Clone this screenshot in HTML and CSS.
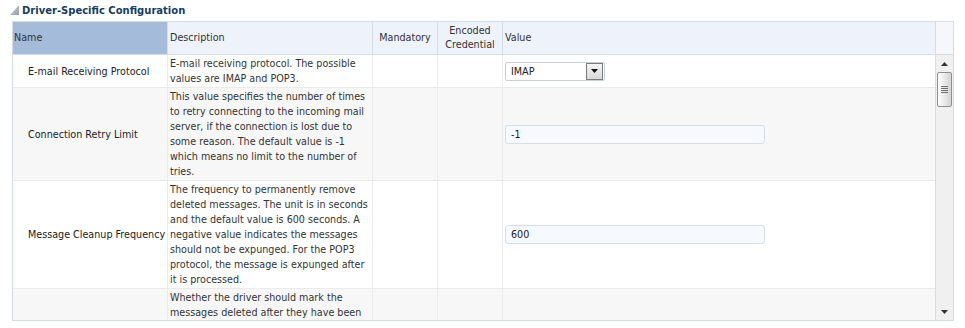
FILE: index.html
```html
<!DOCTYPE html>
<html lang="en">
<head>
    <meta charset="utf-8">
    <title>Driver-Specific Configuration</title>
    <link rel="stylesheet" href="styles.css">
</head>
<body>
<div class="section">
    <h2 class="section-title">
        <svg class="disclosure" width="9" height="10" viewBox="0 0 9 10">
            <defs>
                <linearGradient id="tri" x1="0" y1="0" x2="1" y2="1">
                    <stop offset="0" stop-color="#d9dee4"/>
                    <stop offset="1" stop-color="#8e9aa6"/>
                </linearGradient>
            </defs>
            <polygon points="9,0 9,10 0,10" fill="url(#tri)"/>
        </svg>
        Driver-Specific Configuration
    </h2>

    <div class="grid">
        <div class="grid-head">
            <div class="hcell selected">Name</div>
            <div class="hcell">Description</div>
            <div class="hcell center">Mandatory</div>
            <div class="hcell center">Encoded<br>Credential</div>
            <div class="hcell">Value</div>
            <div class="hcell scroll-head"></div>
        </div>

        <div class="grid-body">
            <div class="rows">
                <!-- E-mail protocol -->
                <div class="row r1">
                    <div class="cell name">E-mail Receiving Protocol</div>
                    <div class="cell desc">E-mail receiving protocol. The possible<br>values are IMAP and POP3.</div>
                    <div class="cell"></div>
                    <div class="cell"></div>
                    <div class="cell value">
                        <div class="select">
                            <span>IMAP</span>
                            <span class="select-btn"><svg width="7" height="4" viewBox="0 0 7 4"><polygon points="0,0 7,0 3.5,4" fill="#111"/></svg></span>
                        </div>
                    </div>
                </div>
                <!-- Retry limit -->
                <div class="row r2 alt">
                    <div class="cell name">Connection Retry Limit</div>
                    <div class="cell desc">This value specifies the number of times<br>to retry connecting to the incoming mail<br>server, if the connection is lost due to<br>some reason. The default value is -1<br>which means no limit to the number of<br>tries.</div>
                    <div class="cell"></div>
                    <div class="cell"></div>
                    <div class="cell value"><div class="text-input">-1</div></div>
                </div>
                <!-- Cleanup -->
                <div class="row r3">
                    <div class="cell name">Message Cleanup Frequency</div>
                    <div class="cell desc">The frequency to permanently remove<br>deleted messages. The unit is in seconds<br>and the default value is 600 seconds. A<br>negative value indicates the messages<br>should not be expunged. For the POP3<br>protocol, the message is expunged after<br>it is processed.</div>
                    <div class="cell"></div>
                    <div class="cell"></div>
                    <div class="cell value"><div class="text-input">600</div></div>
                </div>
                <!-- Mark deleted -->
                <div class="row r4 alt">
                    <div class="cell name"></div>
                    <div class="cell desc">Whether the driver should mark the<br>messages deleted after they have been<br>read.</div>
                    <div class="cell"></div>
                    <div class="cell"></div>
                    <div class="cell value"></div>
                </div>
            </div>

            <div class="scrollbar">
                <svg class="arrow" width="7" height="4" viewBox="0 0 7 4"><polygon points="3.5,0 7,4 0,4" fill="#333"/></svg>
                <div class="thumb">
                    <span></span><span></span><span></span><span></span>
                </div>
                <div class="track"></div>
                <svg class="arrow" width="7" height="4" viewBox="0 0 7 4"><polygon points="0,0 7,0 3.5,4" fill="#333"/></svg>
            </div>
        </div>
    </div>
</div>
</body>
</html>
```

FILE: styles.css
```css
body { margin: 0; background: #fff; color: #333; font-family: "DejaVu Sans", Tahoma, sans-serif; font-size: 9.6px; }
.section { padding: 0 12px; }
.section-title { margin: 0; height: 21px; display: flex; align-items: center; gap: 3px; font-size: 10px; font-weight: bold; color: #163c5e; }
.disclosure { margin-left: -2px; margin-top: -2px; }

.grid { border: 1px solid #d5dce5; width: 940px; }
.grid-head { display: grid; grid-template-columns: 155px 205px 65px 65px 433px 17px; height: 33px; background: #eef2fa; }
.hcell { box-sizing: border-box; border-right: 1px solid #d5dce5; border-bottom: 1px solid #d5dce5; display: flex; align-items: center; padding-left: 2px; line-height: 14px; }
.hcell.center { justify-content: center; text-align: center; padding-left: 0; }
.hcell.selected { background: #a4bcda; padding-left: 1px; }
.hcell.scroll-head { background: #f5f7fc; border-right: none; }

.grid-body { display: flex; height: 265px; }
.rows { width: 923px; overflow: hidden; }
.row { display: grid; grid-template-columns: 155px 205px 65px 65px 433px; border-bottom: 1px solid #ebebeb; }
.row.alt { background: #f7f7f7; }
.r1 { height: 32px; }
.r2 { height: 92px; }
.r3 { height: 107px; }
.r4 { height: 60px; }
.cell { box-sizing: border-box; border-right: 1px solid #ebebeb; line-height: 15px; }
.cell.name { display: flex; align-items: center; padding-left: 15px; white-space: nowrap; overflow: hidden; color: #222; }
.cell.desc { padding: 1px 0 0 2px; white-space: nowrap; }
.cell.value { display: flex; align-items: center; padding-left: 2px; border-right: none; }

.select { box-sizing: border-box; width: 100px; height: 19px; border: 1px solid #c6ced8; border-radius: 2px; background: #fff; display: flex; align-items: center; justify-content: space-between; padding: 0 1px 0 5px; color: #222; }
.select-btn { box-sizing: border-box; width: 17px; height: 17px; border: 1px solid #7b7b7b; background: linear-gradient(#f4f4f4, #d9d9d9); display: flex; align-items: center; justify-content: center; }
.text-input { box-sizing: border-box; width: 260px; height: 19px; border: 1px solid #d6dee7; border-radius: 3px; background: #f6fafe; padding-left: 5px; line-height: 17px; color: #222; }

.scrollbar { box-sizing: border-box; width: 18px; margin-left: -1px; background: #f0f0f0; display: flex; flex-direction: column; align-items: center; border-left: 1px solid #d5dce5; }
.scrollbar .arrow { margin: 7px 0 6px; flex: none; }
.scrollbar .arrow:last-child { margin: 0 0 6px; }
.thumb { box-sizing: border-box; width: 15px; height: 35px; border: 1px solid #8f8f8f; border-radius: 2px; background: linear-gradient(90deg, #fdfdfd, #d4d4d4); display: flex; flex-direction: column; align-items: center; justify-content: center; gap: 1px; }
.thumb span { width: 7px; height: 1px; background: #707070; }
.track { flex: 1; }
```
